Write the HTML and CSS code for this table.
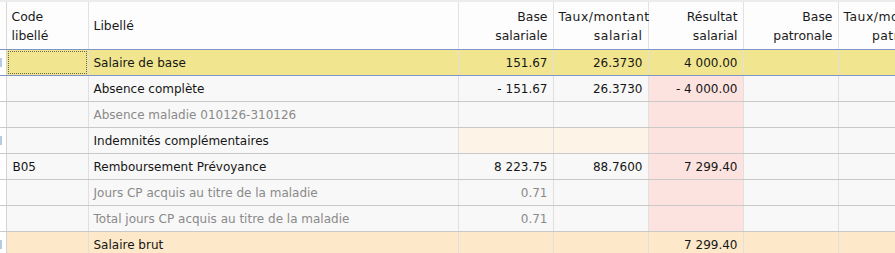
FILE: index.html
```html
<!DOCTYPE html>
<html lang="fr">
<head>
<meta charset="utf-8">
<title>Bulletin</title>
<link rel="stylesheet" href="styles.css">
</head>
<body>
<div class="viewport">
<table class="grid">
  <colgroup>
    <col class="c-stub"><col class="c-code"><col class="c-lib">
    <col class="c-num"><col class="c-num"><col class="c-num"><col class="c-num"><col class="c-num">
  </colgroup>
  <thead>
    <tr>
      <th class="stub"></th>
      <th class="left">Code<br>libellé</th>
      <th class="left">Libellé</th>
      <th>Base<br>salariale</th>
      <th class="wide">Taux/montant<br>salarial</th>
      <th>Résultat<br>salarial</th>
      <th>Base<br>patronale</th>
      <th class="wide">Taux/montant<br>patronal</th>
    </tr>
  </thead>
  <tbody>
    <tr class="selected">
      <td class="stub"><span class="mark"></span></td>
      <td class="code focus"><div class="focus-box"></div></td>
      <td class="lib">Salaire de base</td>
      <td class="num">151.67</td>
      <td class="num">26.3730</td>
      <td class="num">4 000.00</td>
      <td class="num"></td>
      <td class="num"></td>
    </tr>
    <tr>
      <td class="stub"></td>
      <td class="code"></td>
      <td class="lib">Absence complète</td>
      <td class="num">- 151.67</td>
      <td class="num">26.3730</td>
      <td class="num pink">- 4 000.00</td>
      <td class="num"></td>
      <td class="num"></td>
    </tr>
    <tr class="muted">
      <td class="stub"></td>
      <td class="code"></td>
      <td class="lib">Absence maladie 010126-310126</td>
      <td class="num"></td>
      <td class="num"></td>
      <td class="num pink"></td>
      <td class="num"></td>
      <td class="num"></td>
    </tr>
    <tr>
      <td class="stub"><span class="mark"></span></td>
      <td class="code"></td>
      <td class="lib">Indemnités complémentaires</td>
      <td class="num cream"></td>
      <td class="num cream"></td>
      <td class="num pink"></td>
      <td class="num"></td>
      <td class="num"></td>
    </tr>
    <tr>
      <td class="stub"></td>
      <td class="code">B05</td>
      <td class="lib">Remboursement Prévoyance</td>
      <td class="num">8 223.75</td>
      <td class="num">88.7600</td>
      <td class="num pink">7 299.40</td>
      <td class="num"></td>
      <td class="num"></td>
    </tr>
    <tr class="muted">
      <td class="stub"></td>
      <td class="code"></td>
      <td class="lib">Jours CP acquis au titre de la maladie</td>
      <td class="num">0.71</td>
      <td class="num"></td>
      <td class="num pink"></td>
      <td class="num"></td>
      <td class="num"></td>
    </tr>
    <tr class="muted">
      <td class="stub"></td>
      <td class="code"></td>
      <td class="lib">Total jours CP acquis au titre de la maladie</td>
      <td class="num">0.71</td>
      <td class="num"></td>
      <td class="num pink"></td>
      <td class="num"></td>
      <td class="num"></td>
    </tr>
    <tr class="total">
      <td class="stub"><span class="mark"></span></td>
      <td class="code"></td>
      <td class="lib">Salaire brut</td>
      <td class="num"></td>
      <td class="num"></td>
      <td class="num">7 299.40</td>
      <td class="num"></td>
      <td class="num"></td>
    </tr>
  </tbody>
</table>
</div>
</body>
</html>
```

FILE: styles.css
```css
html, body {
  margin: 0;
  padding: 0;
  background: #ffffff;
}
.viewport {
  width: 895px;
  height: 253px;
  overflow: hidden;
}
.grid {
  table-layout: fixed;
  border-collapse: collapse;
  width: 933px;
  font-family: "DejaVu Sans", Verdana, sans-serif;
  font-size: 12px;
  color: #161616;
}
.c-stub { width: 6px; }
.c-code { width: 82px; }
.c-lib { width: 370px; }
.c-num { width: 95px; }

.grid th {
  height: 47px;
  padding: 0 5px;
  font-weight: normal;
  font-size: 12.4px;
  line-height: 19px;
  text-align: right;
  vertical-align: middle;
  background: #fdfdfd;
  border-top: 2px solid #ececec;
  border-right: 1px solid #e2e2e2;
  border-bottom: 1px solid #7f95c6;
  white-space: nowrap;
  overflow: visible;
  color: #1a1a1a;
}
.grid th.wide { letter-spacing: 0.5px; }
.grid th.left { text-align: left; }
.grid th.stub { border-right: 1px solid #d8d8d8; padding: 0; }

.grid td {
  height: 25px;
  padding: 0 5px;
  background: #f8f8f8;
  border-right: 1px solid #e0e0e0;
  border-bottom: 1px solid #c9c9c9;
  white-space: nowrap;
  overflow: hidden;
  vertical-align: middle;
}
.grid td.stub {
  padding: 0;
  background: #ffffff;
  border-right: 1px solid #d4d4d4;
  position: relative;
}
.grid td.code { padding-left: 6px; }
.grid td.num { text-align: right; }

.mark {
  position: absolute;
  left: 0;
  top: 8px;
  width: 2px;
  height: 9px;
  background: #b5cbe6;
}

.selected td {
  background: #f1e68f;
  border-bottom: 1px solid #7f95c6;
}
.selected td.focus {
  position: relative;
}
.focus-box {
  position: absolute;
  left: 1px;
  top: 1px;
  right: 1px;
  bottom: 1px;
  border: 1px dotted #6a6a50;
}

.muted td { color: #8a8a8a; }
.grid td.pink { background: #fde3e0; }
.grid td.cream { background: #fdf3e6; }
.total td { background: #fde8ca; }
.total td.stub { background: #ffffff; }
```
